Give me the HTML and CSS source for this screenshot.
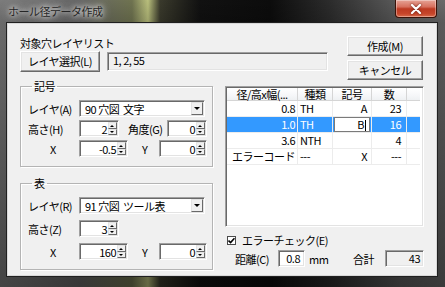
FILE: index.html
```html
<!DOCTYPE html>
<html lang="ja">
<head>
    <meta charset="UTF-8">
    <title>ホール径データ作成</title>
    <link rel="stylesheet" href="styles.css">
</head>
<body>
    <div class="window">
        <div class="titlebar">
            <span class="title">ホール径データ作成</span>
            <div class="close">
                <svg width="12" height="10" viewBox="0 0 12 10">
                    <path d="M2 1 L10 9 M10 1 L2 9" stroke="#fff" stroke-width="2.2" stroke-linecap="round"/>
                </svg>
            </div>
        </div>

        <div class="client">
            <div class="top">
                <div class="top-left">
                    <div class="caption">対象穴レイヤリスト</div>
                    <div class="layer-row">
                        <button class="btn btn-layer">レイヤ選択(L)</button>
                        <div class="edit readonly layer-list">1, 2, 55</div>
                    </div>
                </div>
                <div class="top-right">
                    <button class="btn btn-side">作成(M)</button>
                    <button class="btn btn-side">キャンセル</button>
                </div>
            </div>

            <div class="main">
                <div class="left-col">
                    <fieldset class="group group-symbol">
                        <legend>記号</legend>
                        <div class="row">
                            <span class="lbl">レイヤ(A)</span>
                            <div class="combo">
                                <span class="combo-text">90 穴図&nbsp;&nbsp;文字</span>
                                <span class="drop"><i class="tri-down"></i></span>
                            </div>
                        </div>
                        <div class="row">
                            <span class="lbl">高さ(H)</span>
                            <div class="spin w40"><span class="val">2</span><span class="arrows"><i class="up"></i><i class="down"></i></span></div>
                            <span class="lbl lbl-angle">角度(G)</span>
                            <div class="spin w40"><span class="val">0</span><span class="arrows"><i class="up"></i><i class="down"></i></span></div>
                        </div>
                        <div class="row">
                            <span class="lbl lbl-x">X</span>
                            <div class="spin w49"><span class="val">-0.5</span><span class="arrows"><i class="up"></i><i class="down"></i></span></div>
                            <span class="lbl lbl-y">Y</span>
                            <div class="spin w48"><span class="val">0</span><span class="arrows"><i class="up"></i><i class="down"></i></span></div>
                        </div>
                    </fieldset>

                    <fieldset class="group group-table">
                        <legend>表</legend>
                        <div class="row">
                            <span class="lbl">レイヤ(R)</span>
                            <div class="combo">
                                <span class="combo-text">91 穴図&nbsp;&nbsp;ツール表</span>
                                <span class="drop"><i class="tri-down"></i></span>
                            </div>
                        </div>
                        <div class="row">
                            <span class="lbl">高さ(Z)</span>
                            <div class="spin w40"><span class="val">3</span><span class="arrows"><i class="up"></i><i class="down"></i></span></div>
                        </div>
                        <div class="row">
                            <span class="lbl lbl-x">X</span>
                            <div class="spin w49"><span class="val">160</span><span class="arrows"><i class="up"></i><i class="down"></i></span></div>
                            <span class="lbl lbl-y">Y</span>
                            <div class="spin w48"><span class="val">0</span><span class="arrows"><i class="up"></i><i class="down"></i></span></div>
                        </div>
                    </fieldset>
                </div>

                <div class="right-col">
                    <div class="listview">
                        <table>
                            <colgroup>
                                <col style="width:71px">
                                <col style="width:35px">
                                <col style="width:39px">
                                <col style="width:35px">
                                <col>
                            </colgroup>
                            <thead>
                                <tr><th>径/高x幅(...</th><th>種類</th><th>記号</th><th>数</th><th></th></tr>
                            </thead>
                            <tbody>
                                <tr><td class="r">0.8</td><td>TH</td><td class="r c3">A</td><td class="r c4">23</td><td class="empty"></td></tr>
                                <tr class="sel"><td class="r">1.0</td><td>TH</td><td class="c-edit"><div class="cell-edit">B<span class="caret"></span></div></td><td class="r c4">16</td><td class="empty"></td></tr>
                                <tr><td class="r">3.6</td><td>NTH</td><td class="r c3"></td><td class="r c4">4</td><td class="empty"></td></tr>
                                <tr><td class="r">エラーコード</td><td>---</td><td class="r c3">X</td><td class="r c4">---</td><td class="empty"></td></tr>
                            </tbody>
                        </table>
                    </div>

                    <label class="check-row">
                        <span class="checkbox">
                            <svg width="7" height="7" viewBox="0 0 7 7"><path d="M0.5 3.5 L2.6 5.6 L6.5 1.2" fill="none" stroke="#000" stroke-width="1.6"/></svg>
                        </span>
                        <span>エラーチェック(E)</span>
                    </label>

                    <div class="dist-row">
                        <span class="lbl-dist">距離(C)</span>
                        <div class="edit dist">0.8</div>
                        <span class="unit">mm</span>
                        <span class="lbl-total">合計</span>
                        <div class="edit readonly total">43</div>
                    </div>
                </div>
            </div>
        </div>
    </div>
</body>
</html>
```

FILE: styles.css
```css
* {
    box-sizing: border-box;
}

body {
    margin: 0;
    background: #000;
    font-family: "Noto Sans CJK JP", "Liberation Sans", sans-serif;
    font-size: 11px;
    letter-spacing: -0.5px;
    color: #000;
}

.window {
    width: 445px;
    height: 287px;
    padding: 0 8px 11px 7px;
    display: flex;
    flex-direction: column;
    background:
        linear-gradient(180deg, rgba(0,0,0,0) 0, rgba(0,0,0,0.15) 22px, rgba(0,0,0,0.45) 100%),
        linear-gradient(90deg, #7c7c7c 0, #646464 80px, #6f7350 132px, #b9bf7c 148px, #3a3a2c 160px, #111 200px, #0c0c0c 270px, #2c2c2c 330px, #5c5c5c 400px, #6a6a6a 445px);
}

.titlebar {
    height: 23px;
    display: flex;
    justify-content: space-between;
    align-items: flex-start;
    padding-left: 1px;
}

.title {
    margin-top: 5px;
    font-size: 11px;
    line-height: 13px;
    color: #262626;
    text-shadow: 0 0 4px #e8e8e8, 0 0 8px #d0d0d0, 0 0 10px #c0c0c0;
}

.close {
    width: 42px;
    height: 18px;
    display: flex;
    align-items: center;
    justify-content: center;
    border: 1px solid #3a1208;
    border-top: none;
    border-radius: 0 0 4px 4px;
    background: linear-gradient(180deg, #e6a396 0, #d7705e 40%, #bd3a22 52%, #c7452a 80%, #d86a4a 100%);
    box-shadow: inset 0 0 0 1px rgba(255,255,255,0.35);
}

.close svg {
    filter: drop-shadow(0 0 1px #5a1a10);
}

.client {
    flex: 1;
    background: #f0f0f0;
    border: 1px solid #d8d8d8;
    box-shadow: 0 0 0 1px #202020;
}

/* top part */

.top {
    height: 56px;
    display: flex;
    justify-content: space-between;
    padding: 12px 13px 0 12px;
}

.caption {
    line-height: 14px;
}

.layer-row {
    margin-top: 1px;
    display: flex;
    align-items: center;
}

.btn {
    font: inherit;
    letter-spacing: inherit;
    color: #000;
    background: #f0f0f0;
    border: 1px solid;
    border-color: #fff #696969 #696969 #fff;
    box-shadow: inset -1px -1px #a0a0a0, inset 1px 1px #e3e3e3;
    padding: 0;
    height: 21px;
    line-height: 17px;
}

.btn-layer {
    width: 80px;
}

.top-right {
    display: flex;
    flex-direction: column;
    gap: 4px;
}

.btn-side {
    width: 76px;
}

.edit {
    background: #fff;
    border: 1px solid;
    border-color: #a0a0a0 #fff #fff #a0a0a0;
    box-shadow: inset 1px 1px #696969, inset -1px -1px #e3e3e3;
    line-height: 15px;
}

.readonly {
    background: #f0f0f0;
}

.layer-list {
    margin-left: 7px;
    width: 221px;
    height: 19px;
    padding-left: 5px;
}

/* left groups */

.main {
    display: flex;
    gap: 12px;
    padding-left: 12px;
}

.left-col {
    width: 193px;
}

.group {
    margin: 0;
    min-width: 0;
    border: 1px solid #b4b4b4;
    box-shadow: inset 1px 1px #fff, 1px 1px #fff;
    padding: 8px 5px 9px 7px;
    display: flex;
    flex-direction: column;
}

.group legend {
    padding: 0 2px;
    margin-left: 4px;
    line-height: 12px;
}

.group-symbol {
    gap: 3px;
}

.group-table {
    margin-top: 10px;
    gap: 6px;
}

.row {
    display: flex;
    align-items: center;
    height: 17px;
}

.lbl {
    width: 51px;
    flex: none;
    white-space: nowrap;
}

.lbl-x {
    padding-left: 22px;
}

.lbl-angle {
    width: 39px;
    margin-left: 9px;
}

.lbl-y {
    width: 17px;
    margin-left: 14px;
}

.combo {
    width: 126px;
    height: 17px;
    display: flex;
    background: #fff;
    border: 1px solid;
    border-color: #a0a0a0 #fff #fff #a0a0a0;
    box-shadow: inset 1px 1px #696969, inset -1px -1px #e3e3e3;
    padding: 1px;
}

.combo-text {
    flex: 1;
    padding-left: 4px;
    line-height: 14px;
    white-space: nowrap;
}

.drop {
    width: 12px;
    display: flex;
    align-items: center;
    justify-content: center;
    background: #f0f0f0;
    border: 1px solid;
    border-color: #e3e3e3 #696969 #696969 #e3e3e3;
}

.tri-down {
    border-left: 3px solid transparent;
    border-right: 3px solid transparent;
    border-top: 3px solid #000;
}

.spin {
    height: 17px;
    display: flex;
    background: #fff;
    border: 1px solid;
    border-color: #a0a0a0 #fff #fff #a0a0a0;
    box-shadow: inset 1px 1px #696969, inset -1px -1px #e3e3e3;
    padding: 1px;
}

.w40 { width: 40px; }
.w48 { width: 48px; }
.w49 { width: 49px; }

.spin .val {
    flex: 1;
    text-align: right;
    padding-right: 1px;
    line-height: 14px;
}

.arrows {
    width: 9px;
    display: flex;
    flex-direction: column;
}

.arrows i {
    flex: 1;
    position: relative;
    background: #f0f0f0;
    border: 1px solid;
    border-color: #e3e3e3 #696969 #696969 #e3e3e3;
}

.arrows i::after {
    content: "";
    position: absolute;
    left: 1px;
    top: 2px;
    border-left: 2px solid transparent;
    border-right: 2px solid transparent;
}

.arrows .up::after {
    border-bottom: 2px solid #000;
}

.arrows .down::after {
    top: 1px;
    border-top: 2px solid #000;
}

/* list view */

.right-col {
    width: 199px;
    margin-top: 6px;
}

.listview {
    height: 141px;
    background: #fff;
    border: 1px solid;
    border-color: #a0a0a0 #fff #fff #a0a0a0;
    box-shadow: inset 1px 1px #696969, inset -1px -1px #e3e3e3;
    padding: 1px 3px 1px 1px;
}

.listview table {
    width: 100%;
    table-layout: fixed;
    border-collapse: separate;
    border-spacing: 0;
}

.listview th {
    font-weight: normal;
    height: 13px;
    line-height: 12px;
    padding: 0;
    text-align: center;
    white-space: nowrap;
    background: linear-gradient(180deg, #fff 0, #f6f7f9 60%, #eef0f2 100%);
    border-right: 1px solid #d5d5d5;
    border-bottom: 1px solid #d5d5d5;
}

.listview th:last-child {
    border-right: none;
}

.listview td {
    line-height: 15px;
    padding: 0 0 0 2px;
    white-space: nowrap;
    overflow: hidden;
    border-right: 1px solid #ececec;
    border-bottom: 1px solid #ececec;
}

.listview td.r {
    text-align: right;
    padding: 0 2px 0 0;
}

.listview td.c3 {
    padding-right: 4px;
}

.listview td.c4 {
    padding-right: 5px;
}

.listview td.empty {
    border-right: none;
}

.sel td {
    background: #3399ff;
    color: #fff;
}

.listview td.c-edit {
    padding: 0 1px 0 1px;
}

.cell-edit {
    background: #fff;
    color: #000;
    border: 1px solid #7a7a7a;
    height: 15px;
    line-height: 13px;
    text-align: right;
    padding-right: 3px;
}

.caret {
    display: inline-block;
    width: 1px;
    height: 11px;
    margin-left: 1px;
    vertical-align: -2px;
    background: #000;
}

/* bottom controls */

.check-row {
    display: flex;
    align-items: center;
    height: 14px;
    margin-top: 6px;
    padding-left: 2px;
}

.checkbox {
    width: 9px;
    height: 9px;
    margin-right: 6px;
    display: flex;
    align-items: center;
    justify-content: center;
    background: #fff;
    border: 1px solid #4a4a4a;
}

.dist-row {
    display: flex;
    align-items: center;
    height: 17px;
    margin-top: 3px;
    padding-left: 10px;
}

.lbl-dist {
    width: 43px;
}

.dist {
    width: 27px;
    height: 17px;
    text-align: right;
    padding-right: 4px;
}

.unit {
    margin-left: 4px;
    width: 44px;
}

.lbl-total {
    width: 32px;
}

.total {
    width: 39px;
    height: 17px;
    text-align: right;
    padding-right: 3px;
}
```
